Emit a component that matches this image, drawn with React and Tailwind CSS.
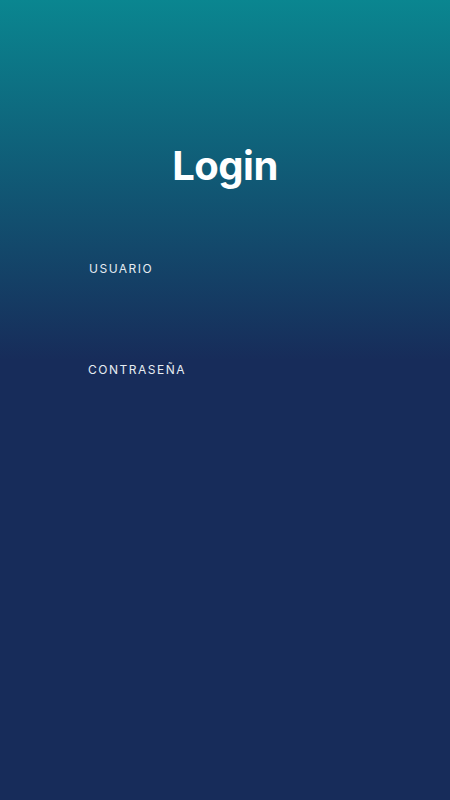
import React from 'react'

const App = () => {
  return (
    <div className="min-h-[800px] w-full bg-linear-to-b/srgb from-[#0a8690] to-[#172c5a] to-45% font-['Inter'] text-white">
      <div className="pt-[139px] flex flex-col items-center">
        <h1 className="text-[40px] leading-[54px] font-bold tracking-[-0.5px]">Login</h1>
      </div>
      <form className="mt-[68px] px-[88px] flex flex-col">
        <label className="text-[12px] leading-[16px] tracking-[1.5px] text-[#e6ecf2] pl-px">USUARIO</label>
        <input type="text" className="h-[64px] bg-transparent outline-none text-white" />
        <label className="mt-[21px] text-[12px] leading-[16px] tracking-[1.5px] text-[#e6ecf2]">CONTRASEÑA</label>
        <input type="password" className="h-[64px] bg-transparent outline-none text-white" />
      </form>
    </div>
  )
}

export default App
